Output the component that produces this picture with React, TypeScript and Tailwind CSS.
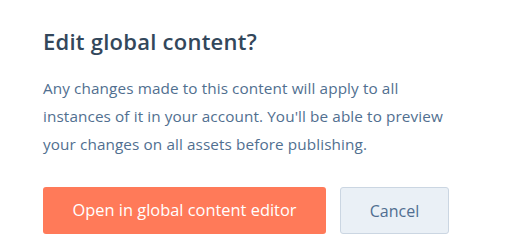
export default function App() {
  return (
    <div className="w-[512px] h-[252px] bg-white overflow-hidden" style={{ fontFamily: "'Open Sans', sans-serif" }}>
      <div className="pl-[43px] pt-[26px]">
        <h1 className="text-[22px] leading-[30px] font-semibold tracking-[0.25px] text-[#33475b]">Edit global content?</h1>
        <p className="mt-[18px] whitespace-nowrap text-[15.3px] leading-[28px] tracking-[0.1px] text-[#516f90]">
          Any changes made to this content will apply to all
          <br />
          instances of it in your account. You'll be able to preview
          <br />
          your changes on all assets before publishing.
        </p>
        <div className="mt-[29px] flex gap-[14px]">
          <button className="w-[283px] h-[47px] rounded-[3px] bg-[#ff7a59] text-white text-[16.4px]">Open in global content editor</button>
          <button className="w-[109px] h-[47px] rounded-[3px] bg-[#eaf0f6] border border-[#cbd6e2] text-[#506e91] text-[16px]">Cancel</button>
        </div>
      </div>
    </div>
  );
}
